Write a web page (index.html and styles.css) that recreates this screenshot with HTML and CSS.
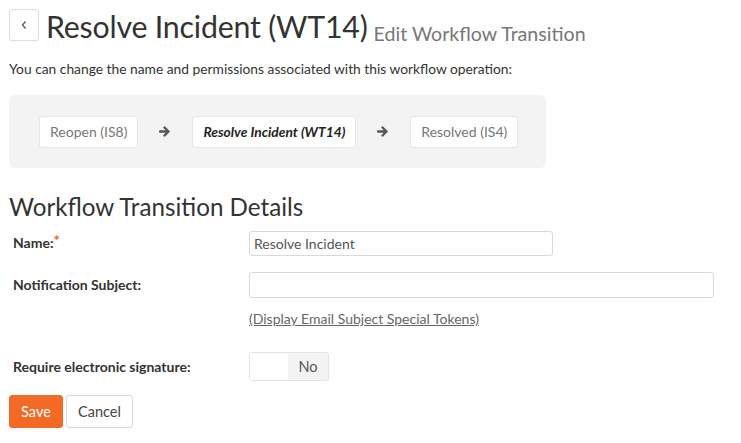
FILE: index.html
```html
<!DOCTYPE html>
<html>
<head>
<meta charset="utf-8">
<link rel="stylesheet" href="styles.css">
</head>
<body>
<div class="page">
  <div class="header">
    <button class="back"><svg width="8" height="10" viewBox="0 0 8 10"><path d="M5.5 1.5 L2.5 5 L5.5 8.5" fill="none" stroke="#555" stroke-width="1.2"/></svg></button>
    <h1 class="title">Resolve Incident (WT14)</h1>
    <span class="subtitle">Edit Workflow Transition</span>
  </div>
  <p class="desc">You can change the name and permissions associated with this workflow operation:</p>
  <div class="flow">
    <div class="node muted">Reopen (IS8)</div>
    <svg class="arrow" width="12" height="11" viewBox="0 0 12 11"><path d="M1 5.5 H9 M5.5 1.5 L9.5 5.5 L5.5 9.5" fill="none" stroke="#555" stroke-width="2.4" stroke-linecap="round" stroke-linejoin="round"/></svg>
    <div class="node current">Resolve Incident (WT14)</div>
    <svg class="arrow" width="12" height="11" viewBox="0 0 12 11"><path d="M1 5.5 H9 M5.5 1.5 L9.5 5.5 L5.5 9.5" fill="none" stroke="#555" stroke-width="2.4" stroke-linecap="round" stroke-linejoin="round"/></svg>
    <div class="node muted">Resolved (IS4)</div>
  </div>
  <h2 class="section">Workflow Transition Details</h2>
  <div class="form">
    <div class="row row-name">
      <label class="label">Name:<span class="req">*</span></label>
      <div class="field"><div class="input name-input">Resolve Incident</div></div>
    </div>
    <div class="row row-subject">
      <label class="label">Notification Subject:</label>
      <div class="field">
        <div class="input subject-input"></div>
        <a class="link">(Display Email Subject Special Tokens)</a>
      </div>
    </div>
    <div class="row row-sig">
      <label class="label">Require electronic signature:</label>
      <div class="field">
        <div class="toggle"><span class="toggle-off"></span><span class="toggle-no">No</span></div>
      </div>
    </div>
  </div>
  <div class="actions">
    <button class="btn save">Save</button>
    <button class="btn cancel">Cancel</button>
  </div>
</div>
</body>
</html>
```
FILE: styles.css
```css
* { box-sizing: border-box; }
html, body { margin: 0; padding: 0; background: #fff; }
body { font-family: Lato, "Open Sans", sans-serif; color: #333; font-size: 13px; }
.page { padding: 9px 9px 0 9px; }
.header { display: flex; align-items: flex-start; height: 38px; }
.back { width: 30px; height: 32px; border: 1px solid #ddd; border-radius: 3px; background: #fff; display: flex; align-items: center; justify-content: center; padding: 0; margin: 0; }
.title { font-size: 30.3px; font-weight: 400; margin: 0 0 0 7px; line-height: 34px; color: #333; letter-spacing: -0.2px; }
.subtitle { font-size: 19.6px; color: #777; margin: 13px 0 0 6px; line-height: 24px; }
.desc { margin: 13px 0 0 0; line-height: 18px; font-size: 13.8px; color: #333; }
.flow { margin-top: 17px; background: #f3f3f3; border-radius: 6px; width: 537px; height: 73px; display: flex; align-items: center; padding: 0 0 0 30px; }
.node { height: 32px; background: #fff; border: 1px solid #e6e6e6; border-radius: 3px; display: flex; align-items: center; padding: 0 10px; font-size: 14px; }
.node.muted { color: #777; }
.node.current { color: #222; font-style: italic; font-weight: 700; font-size: 13.8px; }
.arrow { margin: 0 21px; }
.section { font-size: 24.2px; font-weight: 400; margin: 24px 0 0 0; line-height: 30px; color: #333; }
.form { margin-top: 9px; }
.row { display: grid; grid-template-columns: 240px 1fr; }
.label { font-weight: 700; font-size: 14px; padding-left: 4px; color: #333; }
.req { color: #f26a25; font-size: 15px; line-height: 10px; vertical-align: top; position: relative; top: 1px; }
.row-name { height: 41px; }
.row-name .label { padding-top: 3px; }
.input { border: 1px solid #d9d9d9; border-radius: 3px; height: 26px; padding: 0 5px; display: flex; align-items: center; font-size: 14px; color: #555; background: #fff; }
.name-input { width: 304px; height: 25px; padding: 0 4px; }
.subject-input { width: 465px; }
.row-subject { height: 80px; }
.row-subject .label { padding-top: 4px; }
.link { display: block; margin-top: 12px; color: #666; text-decoration: underline; font-size: 14px; }
.row-sig .label { padding-top: 6px; }
.toggle { width: 80px; height: 29px; border: 1px solid #e3e3e3; border-radius: 3px; display: flex; overflow: hidden; }
.toggle-off { width: 38px; background: #fff; }
.toggle-no { flex: 1; background: #f3f3f3; display: flex; align-items: center; justify-content: center; color: #555; font-size: 14.5px; }
.actions { display: flex; gap: 3px; margin-top: 14px; }
.btn { height: 33px; border-radius: 3px; font-family: Lato, sans-serif; font-size: 14.5px; padding: 0; margin: 0; }
.save { width: 54px; background: #f26a25; border: 1px solid #f26a25; color: #fff; }
.cancel { width: 67px; background: #fff; border: 1px solid #d9d9d9; color: #444; }
```
